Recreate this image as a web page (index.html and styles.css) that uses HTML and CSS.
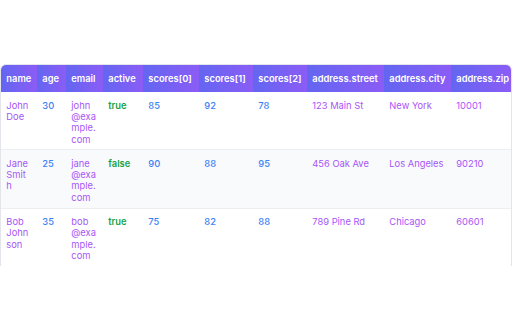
FILE: index.html
```html
<!DOCTYPE html>
<html>
<head>
<meta charset="utf-8">
<link rel="stylesheet" href="styles.css">
</head>
<body>
<div class="page">
  <div class="card">
    <table class="grid">
      <colgroup>
        <col class="w-name"><col class="w-age"><col class="w-email"><col class="w-active">
        <col class="w-s0"><col class="w-s1"><col class="w-s2">
        <col class="w-street"><col class="w-city"><col class="w-zip">
      </colgroup>
      <thead>
        <tr>
          <th>name</th><th>age</th><th>email</th><th>active</th>
          <th>scores[0]</th><th>scores[1]</th><th>scores[2]</th>
          <th>address.street</th><th>address.city</th><th>address.zip</th>
        </tr>
      </thead>
      <tbody>
        <tr>
          <td class="str">John Doe</td><td class="num">30</td><td class="str mail">john@example.com</td><td class="bool">true</td>
          <td class="num">85</td><td class="num">92</td><td class="num">78</td>
          <td class="str">123 Main St</td><td class="str">New York</td><td class="str">10001</td>
        </tr>
        <tr class="alt">
          <td class="str">Jane Smith</td><td class="num">25</td><td class="str mail">jane@example.com</td><td class="bool">false</td>
          <td class="num">90</td><td class="num">88</td><td class="num">95</td>
          <td class="str">456 Oak Ave</td><td class="str">Los Angeles</td><td class="str">90210</td>
        </tr>
        <tr>
          <td class="str">Bob Johnson</td><td class="num">35</td><td class="str mail">bob@example.com</td><td class="bool">true</td>
          <td class="num">75</td><td class="num">82</td><td class="num">88</td>
          <td class="str">789 Pine Rd</td><td class="str">Chicago</td><td class="str">60601</td>
        </tr>
      </tbody>
    </table>
  </div>
</div>
</body>
</html>
```
FILE: styles.css
```css
html, body {
  margin: 0;
  padding: 0;
  background: #ffffff;
}
body {
  font-family: Inter, "Liberation Sans", sans-serif;
  font-size: 9.33px;
  line-height: 11.3px;
}
.page {
  padding-top: 64px;
}
.card {
  width: 510px;
  border: 1px solid #e3e5ea;
  border-bottom: 0;
  border-radius: 6px 6px 0 0;
  overflow: hidden;
  background: #ffffff;
}
.grid {
  width: 510px;
  table-layout: fixed;
  border-collapse: collapse;
  border-spacing: 0;
}
.w-name { width: 36px; }
.w-age { width: 29px; }
.w-email { width: 37px; }
.w-active { width: 40px; }
.w-s0 { width: 56px; }
.w-s1 { width: 54px; }
.w-s2 { width: 54px; }
.w-street { width: 77px; }
.w-city { width: 67px; }
.w-zip { width: 60px; }
.grid th {
  background: linear-gradient(90deg, #6366f1, #8b5cf6);
  color: #ffffff;
  font-weight: 600;
  text-align: left;
  padding: 8px 5.33px;
  white-space: nowrap;
}
.grid td {
  vertical-align: top;
  padding: 7.33px 7.5px 4.67px 5.33px;
  overflow-wrap: anywhere;
  border-top: 1px solid #eceef2;
}
.grid td.mail {
  padding-right: 6.4px;
}
.grid tbody tr:first-child td {
  border-top: 0;
}
.grid tr.alt td {
  background: #f8fafc;
}
.str {
  color: #a855f7;
}
.num {
  color: #3b82f6;
  font-weight: 500;
}
.bool {
  color: #16a34a;
  font-weight: 600;
}
```
